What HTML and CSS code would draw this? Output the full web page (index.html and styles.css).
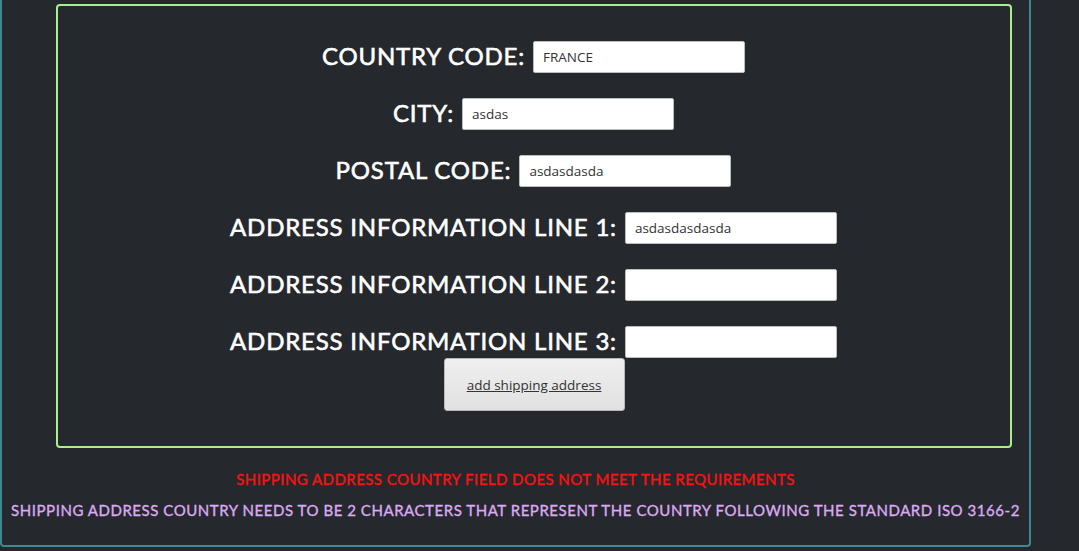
FILE: index.html
```html
<!DOCTYPE html>
<html>
<head>
<meta charset="utf-8">
<link rel="stylesheet" href="styles.css">
</head>
<body>
<div class="outer">
  <div class="formbox">
    <div class="row"><label class="lbl">COUNTRY CODE:</label><input class="inp" type="text" value="FRANCE"></div>
    <div class="row"><label class="lbl">CITY:</label><input class="inp" type="text" value="asdas"></div>
    <div class="row"><label class="lbl">POSTAL CODE:</label><input class="inp" type="text" value="asdasdasda"></div>
    <div class="row"><label class="lbl">ADDRESS INFORMATION LINE 1:</label><input class="inp" type="text" value="asdasdasdasda"></div>
    <div class="row"><label class="lbl">ADDRESS INFORMATION LINE 2:</label><input class="inp" type="text" value=""></div>
    <div class="row last"><label class="lbl">ADDRESS INFORMATION LINE 3:</label><input class="inp" type="text" value=""></div>
    <button class="btn">add shipping address</button>
  </div>
  <p class="err">SHIPPING ADDRESS COUNTRY FIELD DOES NOT MEET THE REQUIREMENTS</p>
  <p class="hint">SHIPPING ADDRESS COUNTRY NEEDS TO BE 2 CHARACTERS THAT REPRESENT THE COUNTRY FOLLOWING THE STANDARD ISO 3166-2</p>
</div>
</body>
</html>
```
FILE: styles.css
```css
html, body {
  margin: 0;
  padding: 0;
  background: #25282c;
}
body {
  font-family: "Lato", sans-serif;
}
.outer {
  width: 1027px;
  height: 545px;
  border: 2px solid #3f8791;
  border-top: none;
  border-radius: 0 0 4px 4px;
  display: flex;
  flex-direction: column;
  align-items: center;
}
.formbox {
  box-sizing: border-box;
  width: 956px;
  height: 444px;
  margin-top: 4px;
  margin-left: 36px;
  border: 2px solid #a7f08b;
  border-radius: 4px;
  padding-top: 35px;
  display: flex;
  flex-direction: column;
  align-items: center;
}
.row {
  display: flex;
  align-items: center;
  gap: 8px;
  height: 32px;
  margin-bottom: 25px;
}
.row.last {
  margin-bottom: 0;
}
.lbl {
  color: #ffffff;
  font-family: "Lato", sans-serif;
  font-weight: 400;
  font-size: 24px;
  letter-spacing: 0.8px;
  -webkit-text-stroke: 0.6px #ffffff;
  margin-top: -3px;
}
.inp {
  box-sizing: border-box;
  width: 212px;
  height: 32px;
  border: 1px solid #bdbdbd;
  border-radius: 2px;
  background: #fff;
  padding: 0 9px;
  font-family: "Open Sans", sans-serif;
  font-size: 13.5px;
  color: #333;
  outline: none;
}
.btn {
  width: 181px;
  height: 53px;
  border: 1px solid #b9b9b9;
  border-radius: 3px;
  background: linear-gradient(#efefef, #e1e1e1);
  font-family: "Open Sans", sans-serif;
  font-size: 13.5px;
  color: #333;
  text-decoration: underline;
  padding: 0;
  margin-left: 1px;
}
.err {
  margin: 22px 0 0 0;
  color: #ff1010;
  font-family: "Lato", sans-serif;
  font-weight: 400;
  font-size: 15px;
  letter-spacing: 0.45px;
  -webkit-text-stroke: 0.35px #ff1010;
}
.hint {
  margin: 13px 0 0 0;
  color: #dca9f2;
  font-family: "Lato", sans-serif;
  font-weight: 400;
  font-size: 15px;
  letter-spacing: 0.55px;
  -webkit-text-stroke: 0.35px #dca9f2;
}
```
